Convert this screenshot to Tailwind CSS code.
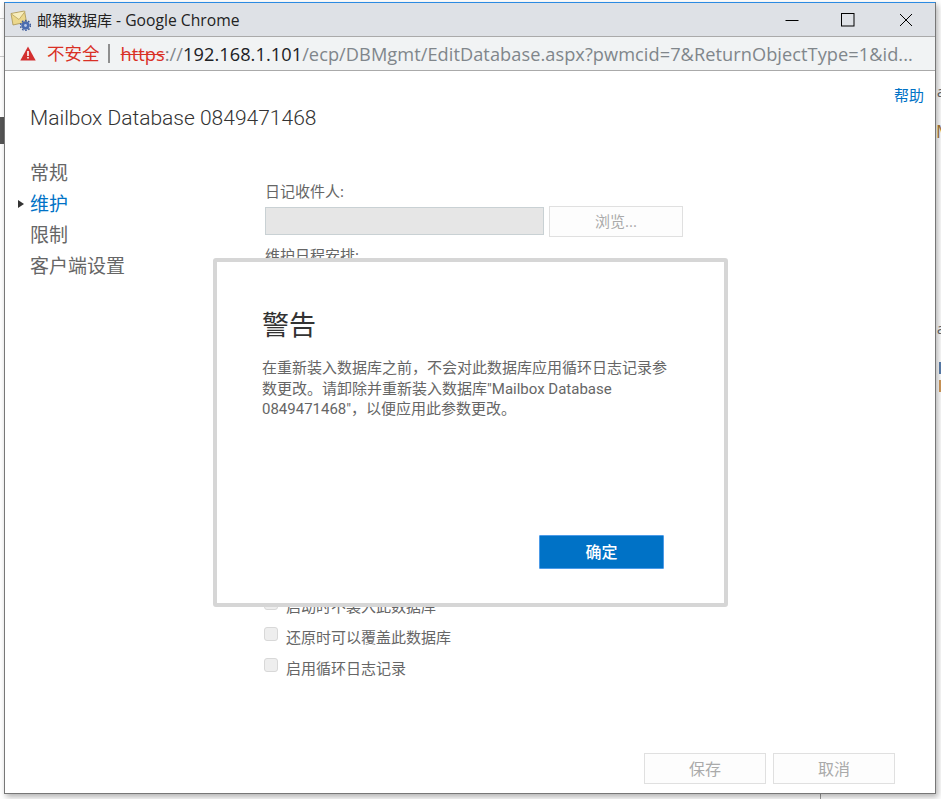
<!DOCTYPE html>
<html lang="zh-CN">
<head>
    <meta charset="UTF-8">
    <title>邮箱数据库 - Google Chrome</title>
    <script src="https://cdn.jsdelivr.net/npm/@tailwindcss/browser@4"></script>
</head>
<body class="bg-white font-['Open_Sans','Noto_Sans_CJK_SC',sans-serif]">
<div class="relative w-[941px] h-[799px] overflow-hidden bg-white">
    <!-- Page behind the popup -->
    <div class="absolute left-0 top-[18px] w-[4px] h-px bg-[#ccc]"></div>
    <div class="absolute left-0 top-[56px] w-[4px] h-px bg-[#ccc]"></div>
    <div class="absolute left-0 top-[117px] w-[4px] h-[27px] bg-[#555]"></div>
    <div class="absolute left-[937px] top-[85px] text-[14px] leading-none text-[#666]">a</div>
    <div class="absolute left-[936px] top-[122px] text-[18px] leading-none text-[#a87a3a]">M</div>
    <div class="absolute left-[937px] top-[322px] text-[14px] leading-none text-[#666]">a</div>
    <div class="absolute left-[939px] top-[362px] w-[2px] h-[12px] bg-[#5b7fae]"></div>
    <div class="absolute left-[939px] top-[380px] w-[2px] h-[12px] bg-[#d39a5a]"></div>
    <div class="absolute left-[820px] top-[790px] w-px h-[9px] bg-[#999]"></div>

    <!-- Popup window -->
    <div class="absolute left-[4px] top-[2px] w-[932px] h-[792px] flex flex-col bg-white border-x border-b border-[#777] border-t border-t-[#2b8ae2] shadow-[2px_3px_6px_rgba(0,0,0,0.3)]">
        <!-- Title bar -->
        <div class="h-[34px] shrink-0 flex items-center bg-[#dee1e6] border-b border-[#aaa]">
            <svg class="ml-[5px] mt-[2px]" width="21" height="21" viewBox="0 0 21 21">
                <path d="M1 3.5 L14.5 1 L16.5 12 L3 15 Z" fill="#ecd88c" stroke="#a89350" stroke-width="0.8"/>
                <path d="M1.5 4 L9 9.5 L15 1.5" fill="#f7edbe" stroke="#b8a25c" stroke-width="0.8"/>
                <circle cx="15.5" cy="15.5" r="4.2" fill="#4a6cb0"/>
                <circle cx="15.5" cy="15.5" r="5" fill="none" stroke="#3c5a9c" stroke-width="1.4" stroke-dasharray="1.6 1.6"/>
                <circle cx="15.5" cy="15.5" r="1.4" fill="#b9c9e8"/>
            </svg>
            <span class="ml-[6px] mt-[2px] text-[15px] leading-none text-[#222]">邮箱数据库<span class="text-[15.7px]"> - Google Chrome</span></span>
            <div class="ml-auto flex items-center">
                <svg class="mr-[42px]" width="14" height="14" viewBox="0 0 14 14"><path d="M0.5 7.5 H13.5" stroke="#000" stroke-width="1"/></svg>
                <svg class="mr-[44px]" width="14" height="14" viewBox="0 0 14 14"><rect x="0.5" y="0.5" width="12.5" height="12.5" fill="none" stroke="#000" stroke-width="1"/></svg>
                <svg class="mr-[22px]" width="14" height="14" viewBox="0 0 14 14"><path d="M1 1 L13 13 M13 1 L1 13" stroke="#000" stroke-width="1"/></svg>
            </div>
        </div>

        <!-- Address bar -->
        <div class="h-[34px] shrink-0 flex items-center bg-[#f1f3f4] border-b border-[#aaa] whitespace-nowrap">
            <svg class="ml-[15px]" width="16" height="15" viewBox="0 0 16 15">
                <path d="M8 0.5 L15.7 14.5 H0.3 Z" fill="#d32f2f"/>
                <path d="M7.2 5 H8.8 V10 H7.2 Z M7.2 11 H8.8 V12.6 H7.2 Z" fill="#fff"/>
            </svg>
            <span class="ml-[11px] mt-[1px] text-[17.5px] leading-none text-[#d93025]">不安全</span>
            <span class="ml-[8px] w-[2px] h-[19px] bg-[#8f8f8f]"></span>
            <div class="ml-[11px] mt-[2px] text-[18.2px] tracking-[0.06px] leading-none text-[#80868b]"><span class="text-[#d93025] line-through">https</span>://<span class="text-[#202124]">192.168.1.101</span>/ecp/DBMgmt/EditDatabase.aspx?pwmcid=7&amp;ReturnObjectType=1&amp;id...</div>
        </div>

        <!-- Content -->
        <div class="relative flex-1 flex flex-col">
            <div class="flex justify-end pt-[15px] pr-[11px] h-[34px]">
                <a href="#" class="text-[15px] leading-[18px] text-[#0072c6]">帮助</a>
            </div>
            <h1 class="ml-[25px] mt-[-1px] text-[21px] leading-[28px] font-light font-['Roboto','Noto_Sans_CJK_SC',sans-serif] text-[#333]">Mailbox Database 0849471468</h1>

            <div class="flex mt-[26px]">
                <!-- Left nav -->
                <ul class="w-[260px] shrink-0 pl-[25px] text-[19px] leading-[31px] text-[#666]">
                    <li>常规</li>
                    <li class="relative text-[#0072c6]">
                        <span class="absolute left-[-12px] top-[11px] w-0 h-0 border-y-[4px] border-y-transparent border-l-[6px] border-l-[#333]"></span>
                        维护
                    </li>
                    <li>限制</li>
                    <li>客户端设置</li>
                </ul>

                <!-- Form -->
                <div class="flex-1 pt-[23px] text-[15px] text-[#666]">
                    <div class="leading-[20px]">日记收件人:</div>
                    <div class="flex items-center gap-[5px] mt-[5px]">
                        <div class="w-[279px] h-[28px] mb-[1px] bg-[#e6e6e6] border border-[#c9d1d4]"></div>
                        <button class="w-[134px] h-[31px] bg-[#fdfdfd] border border-[#e0e0e0] text-[#aaa]">浏览...</button>
                    </div>
                    <div class="mt-[8px] leading-[20px]">维护日程安排:</div>
                    <div class="mt-[331px] -ml-px flex items-center gap-[8px] leading-[20px]">
                        <span class="w-[14px] h-[14px] mb-[6px] bg-[#eee] border border-[#d8d8d8] rounded-[3px]"></span>启动时不装入此数据库
                    </div>
                    <div class="mt-[11px] -ml-px flex items-center gap-[8px] leading-[20px]">
                        <span class="w-[14px] h-[14px] mb-[6px] bg-[#eee] border border-[#d8d8d8] rounded-[3px]"></span>还原时可以覆盖此数据库
                    </div>
                    <div class="mt-[11px] -ml-px flex items-center gap-[8px] leading-[20px]">
                        <span class="w-[14px] h-[14px] mb-[6px] bg-[#eee] border border-[#d8d8d8] rounded-[3px]"></span>启用循环日志记录
                    </div>
                </div>
            </div>

            <!-- Footer buttons -->
            <div class="mt-auto flex justify-end gap-[7px] pr-[40px] pb-[9px] text-[16px] text-[#aaa]">
                <button class="w-[122px] h-[31px] bg-[#fdfdfd] border border-[#e0e0e0]">保存</button>
                <button class="w-[122px] h-[31px] bg-[#fdfdfd] border border-[#e0e0e0]">取消</button>
            </div>

            <!-- Warning dialog -->
            <div class="absolute left-[208px] top-[187px] w-[515px] h-[349px] flex flex-col bg-white border-[4px] border-[#d6d6d6] rounded-[3px] pl-[45px] pr-[50px]">
                <h2 class="mt-[45px] text-[27px] leading-[36px] text-[#333]">警告</h2>
                <p class="mt-[15px] text-[15px] leading-[20.5px] font-['Roboto','Noto_Sans_CJK_SC',sans-serif] text-[#666]">在重新装入数据库之前，不会对此数据库应用循环日志记录参数更改。请卸除并重新装入数据库"Mailbox Database 0849471468"，以便应用此参数更改。</p>
                <div class="mt-auto mb-[34px] flex justify-end pr-[10px]">
                    <button class="w-[125px] h-[34px] bg-[#0072c6] border border-[#4c9be8] rounded-[1px] text-[16px] font-medium text-white">确定</button>
                </div>
            </div>
        </div>
    </div>
</div>
</body>
</html>
